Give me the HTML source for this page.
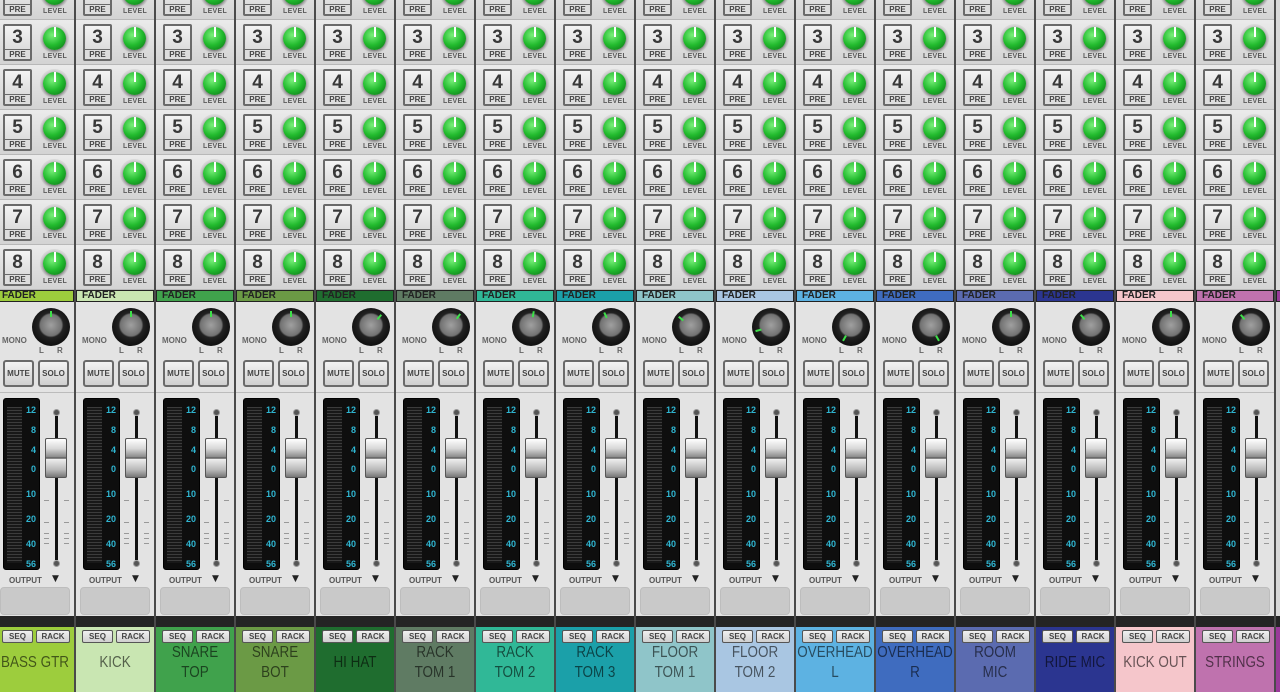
<!DOCTYPE html>
<html><head><meta charset="utf-8"><style>
*{box-sizing:border-box}
body{margin:0;width:1280px;height:692px;overflow:hidden;background:#262626;font-family:"Liberation Sans",sans-serif;position:relative}
.s{position:absolute;top:0;width:80px;height:692px;border-right:2px solid #4a4a4a;background:#e3e3e3;overflow:hidden}
.r{position:absolute;left:0;width:78px;height:45px;background:linear-gradient(#ebebeb,#d3d3d3);border-bottom:1px solid #b8b8b8}
.r2{top:-25px}.r3{top:20px}.r4{top:65px}.r5{top:110px}.r6{top:155px}.r7{top:200px}.r8{top:245px}
.r b{position:absolute;left:7px;top:4px;width:29px;height:37px;border:2px solid #6a6a6a;border-radius:2px;background:linear-gradient(#f4f4f4,#d2d2d2);font:bold 19px/24px "Liberation Sans",sans-serif;text-align:center;color:#383838}
.r i{position:absolute;left:9px;top:29px;width:25px;height:10px;border-top:1px solid #6a6a6a;font:bold 8px/10px "Liberation Sans",sans-serif;text-align:center;font-style:normal;color:#444;background:#ddd}
.r u{position:absolute;left:47px;top:7px;width:23px;height:23px;border-radius:50%;background:radial-gradient(circle at 40% 35%,#7af07a,#22bb2e 50%,#0b6a14);box-shadow:0 1px 3px #0009,0 0 0 3px rgba(120,120,120,.12)}
.r u::after{content:"";position:absolute;left:10.5px;top:0;width:2px;height:10px;background:#fff}
.r em{position:absolute;left:47px;top:33px;font:bold 7px/8px "Liberation Sans",sans-serif;color:#5a5a5a;font-style:normal;letter-spacing:.3px}
.f{position:absolute;top:290px;left:0;width:78px;height:12px;border:1px solid #222;background:var(--c);font:bold 10px/10px "Liberation Sans",sans-serif;color:#222;padding-left:5px}
.p{position:absolute;left:36px;top:308px;width:38px;height:38px;border-radius:50%;background:radial-gradient(circle at 50% 45%,#a0a0a0 0,#727272 38%,#222 44%,#111 70%,#2a2a2a 100%)}
.p i{position:absolute;left:0;top:0;width:38px;height:38px}
.p i::before{content:"";position:absolute;left:18px;top:3px;width:2px;height:6px;background:#3ee04a}
.mo{position:absolute;left:6px;top:336px;font:bold 8px "Liberation Sans",sans-serif;color:#666}
.lr{position:absolute;top:346px;font:bold 8px "Liberation Sans",sans-serif;color:#666}
.m{position:absolute;top:360px;width:31px;height:27px;border:2px solid #6a6a6a;border-radius:3px;background:linear-gradient(#f3f3f3,#cfcfcf);font:bold 8px/23px "Liberation Sans",sans-serif;text-align:center;color:#444}
.dv{position:absolute;top:392px;left:0;width:78px;height:1px;background:#bbb}
.mt{position:absolute;left:7px;top:398px;width:37px;height:172px;background:#0e0e0e;border:1px solid #000;border-radius:3px}
.mt s{position:absolute;left:3px;top:8px;width:15px;bottom:6px;background:repeating-linear-gradient(#3c3c3c 0 1px,#181818 1px 3px)}
.mt span{position:absolute;right:3px;color:#2fb6d2;font:bold 9px/10px "Liberation Sans",sans-serif}
.tr{position:absolute;left:59px;top:416px;width:3px;height:144px;background:#111}
.dt{position:absolute;left:57px;width:7px;height:7px;border-radius:50%;background:#555;border:1px solid #999}
.h{position:absolute;left:49px;top:438px;width:22px;height:40px;border:1px solid #555;border-radius:2px;background:linear-gradient(#fff 0,#d8d8d8 25%,#888 48%,#333 50%,#eee 53%,#bbb 80%,#777 100%)}
.tk{position:absolute;left:48px;width:25px;height:1px;background:linear-gradient(90deg,#999 0 5px,transparent 5px 20px,#999 20px)}
.o{position:absolute;left:13px;top:576px;font:bold 8px "Liberation Sans",sans-serif;color:#555}
.a{position:absolute;left:56px;top:574px;font:9px "DejaVu Sans",sans-serif;color:#222}
.g{position:absolute;left:4px;top:587px;width:70px;height:28px;background:#c9c9c9;border-radius:4px;border:1px solid #bdbdbd}
.bd{position:absolute;left:0;top:616px;width:78px;height:11px;background:#242424}
.lb{position:absolute;left:0;top:627px;width:78px;height:65px;background:var(--c)}
.q{position:absolute;top:630px;height:13px;border:1px solid #555;border-radius:2px;background:linear-gradient(#f0f0f0,#cfcfcf);font:bold 8px/11px "Liberation Sans",sans-serif;text-align:center;color:#444}
.n{position:absolute;left:-4px;top:643px;width:86px;height:40px;display:flex;align-items:center;justify-content:center;text-align:center;font:16px/20px "Liberation Sans",sans-serif;color:rgba(0,0,0,.58);white-space:nowrap;transform:scaleX(.84)}
</style></head><body>
<div class="s" style="left:-4px;--c:#9dcd3d"><div class="r r2"><b>2</b><i>PRE</i><u></u><em>LEVEL</em></div><div class="r r3"><b>3</b><i>PRE</i><u></u><em>LEVEL</em></div><div class="r r4"><b>4</b><i>PRE</i><u></u><em>LEVEL</em></div><div class="r r5"><b>5</b><i>PRE</i><u></u><em>LEVEL</em></div><div class="r r6"><b>6</b><i>PRE</i><u></u><em>LEVEL</em></div><div class="r r7"><b>7</b><i>PRE</i><u></u><em>LEVEL</em></div><div class="r r8"><b>8</b><i>PRE</i><u></u><em>LEVEL</em></div><div class="f">FADER</div><div class="p"><i style="transform:rotate(0deg)"></i></div><div class="mo">MONO</div><div class="lr" style="left:43px">L</div><div class="lr" style="left:61px">R</div><div class="m" style="left:7px">MUTE</div><div class="m" style="left:42px">SOLO</div><div class="dv"></div><div class="mt"><s></s><span style="top:6px">12</span><span style="top:26px">8</span><span style="top:46px">4</span><span style="top:65px">0</span><span style="top:90px">10</span><span style="top:115px">20</span><span style="top:140px">40</span><span style="top:160px">56</span></div><div class="tr"></div><div class="dt" style="top:409px"></div><div class="dt" style="top:560px"></div><div class="tk" style="top:500px"></div><div class="tk" style="top:522px"></div><div class="tk" style="top:533px"></div><div class="tk" style="top:538px"></div><div class="tk" style="top:543px"></div><div class="h"></div><div class="o">OUTPUT</div><div class="a">▼</div><div class="g"></div><div class="bd"></div><div class="lb"></div><div class="q" style="left:6px;width:31px">SEQ</div><div class="q" style="left:40px;width:34px">RACK</div><div class="n">BASS GTR</div></div>
<div class="s" style="left:76px;--c:#c9e6b2"><div class="r r2"><b>2</b><i>PRE</i><u></u><em>LEVEL</em></div><div class="r r3"><b>3</b><i>PRE</i><u></u><em>LEVEL</em></div><div class="r r4"><b>4</b><i>PRE</i><u></u><em>LEVEL</em></div><div class="r r5"><b>5</b><i>PRE</i><u></u><em>LEVEL</em></div><div class="r r6"><b>6</b><i>PRE</i><u></u><em>LEVEL</em></div><div class="r r7"><b>7</b><i>PRE</i><u></u><em>LEVEL</em></div><div class="r r8"><b>8</b><i>PRE</i><u></u><em>LEVEL</em></div><div class="f">FADER</div><div class="p"><i style="transform:rotate(0deg)"></i></div><div class="mo">MONO</div><div class="lr" style="left:43px">L</div><div class="lr" style="left:61px">R</div><div class="m" style="left:7px">MUTE</div><div class="m" style="left:42px">SOLO</div><div class="dv"></div><div class="mt"><s></s><span style="top:6px">12</span><span style="top:26px">8</span><span style="top:46px">4</span><span style="top:65px">0</span><span style="top:90px">10</span><span style="top:115px">20</span><span style="top:140px">40</span><span style="top:160px">56</span></div><div class="tr"></div><div class="dt" style="top:409px"></div><div class="dt" style="top:560px"></div><div class="tk" style="top:500px"></div><div class="tk" style="top:522px"></div><div class="tk" style="top:533px"></div><div class="tk" style="top:538px"></div><div class="tk" style="top:543px"></div><div class="h"></div><div class="o">OUTPUT</div><div class="a">▼</div><div class="g"></div><div class="bd"></div><div class="lb"></div><div class="q" style="left:6px;width:31px">SEQ</div><div class="q" style="left:40px;width:34px">RACK</div><div class="n">KICK</div></div>
<div class="s" style="left:156px;--c:#40a24c"><div class="r r2"><b>2</b><i>PRE</i><u></u><em>LEVEL</em></div><div class="r r3"><b>3</b><i>PRE</i><u></u><em>LEVEL</em></div><div class="r r4"><b>4</b><i>PRE</i><u></u><em>LEVEL</em></div><div class="r r5"><b>5</b><i>PRE</i><u></u><em>LEVEL</em></div><div class="r r6"><b>6</b><i>PRE</i><u></u><em>LEVEL</em></div><div class="r r7"><b>7</b><i>PRE</i><u></u><em>LEVEL</em></div><div class="r r8"><b>8</b><i>PRE</i><u></u><em>LEVEL</em></div><div class="f">FADER</div><div class="p"><i style="transform:rotate(0deg)"></i></div><div class="mo">MONO</div><div class="lr" style="left:43px">L</div><div class="lr" style="left:61px">R</div><div class="m" style="left:7px">MUTE</div><div class="m" style="left:42px">SOLO</div><div class="dv"></div><div class="mt"><s></s><span style="top:6px">12</span><span style="top:26px">8</span><span style="top:46px">4</span><span style="top:65px">0</span><span style="top:90px">10</span><span style="top:115px">20</span><span style="top:140px">40</span><span style="top:160px">56</span></div><div class="tr"></div><div class="dt" style="top:409px"></div><div class="dt" style="top:560px"></div><div class="tk" style="top:500px"></div><div class="tk" style="top:522px"></div><div class="tk" style="top:533px"></div><div class="tk" style="top:538px"></div><div class="tk" style="top:543px"></div><div class="h"></div><div class="o">OUTPUT</div><div class="a">▼</div><div class="g"></div><div class="bd"></div><div class="lb"></div><div class="q" style="left:6px;width:31px">SEQ</div><div class="q" style="left:40px;width:34px">RACK</div><div class="n">SNARE<br>TOP</div></div>
<div class="s" style="left:236px;--c:#6b9a45"><div class="r r2"><b>2</b><i>PRE</i><u></u><em>LEVEL</em></div><div class="r r3"><b>3</b><i>PRE</i><u></u><em>LEVEL</em></div><div class="r r4"><b>4</b><i>PRE</i><u></u><em>LEVEL</em></div><div class="r r5"><b>5</b><i>PRE</i><u></u><em>LEVEL</em></div><div class="r r6"><b>6</b><i>PRE</i><u></u><em>LEVEL</em></div><div class="r r7"><b>7</b><i>PRE</i><u></u><em>LEVEL</em></div><div class="r r8"><b>8</b><i>PRE</i><u></u><em>LEVEL</em></div><div class="f">FADER</div><div class="p"><i style="transform:rotate(0deg)"></i></div><div class="mo">MONO</div><div class="lr" style="left:43px">L</div><div class="lr" style="left:61px">R</div><div class="m" style="left:7px">MUTE</div><div class="m" style="left:42px">SOLO</div><div class="dv"></div><div class="mt"><s></s><span style="top:6px">12</span><span style="top:26px">8</span><span style="top:46px">4</span><span style="top:65px">0</span><span style="top:90px">10</span><span style="top:115px">20</span><span style="top:140px">40</span><span style="top:160px">56</span></div><div class="tr"></div><div class="dt" style="top:409px"></div><div class="dt" style="top:560px"></div><div class="tk" style="top:500px"></div><div class="tk" style="top:522px"></div><div class="tk" style="top:533px"></div><div class="tk" style="top:538px"></div><div class="tk" style="top:543px"></div><div class="h"></div><div class="o">OUTPUT</div><div class="a">▼</div><div class="g"></div><div class="bd"></div><div class="lb"></div><div class="q" style="left:6px;width:31px">SEQ</div><div class="q" style="left:40px;width:34px">RACK</div><div class="n">SNARE<br>BOT</div></div>
<div class="s" style="left:316px;--c:#1f6d2f"><div class="r r2"><b>2</b><i>PRE</i><u></u><em>LEVEL</em></div><div class="r r3"><b>3</b><i>PRE</i><u></u><em>LEVEL</em></div><div class="r r4"><b>4</b><i>PRE</i><u></u><em>LEVEL</em></div><div class="r r5"><b>5</b><i>PRE</i><u></u><em>LEVEL</em></div><div class="r r6"><b>6</b><i>PRE</i><u></u><em>LEVEL</em></div><div class="r r7"><b>7</b><i>PRE</i><u></u><em>LEVEL</em></div><div class="r r8"><b>8</b><i>PRE</i><u></u><em>LEVEL</em></div><div class="f">FADER</div><div class="p"><i style="transform:rotate(40deg)"></i></div><div class="mo">MONO</div><div class="lr" style="left:43px">L</div><div class="lr" style="left:61px">R</div><div class="m" style="left:7px">MUTE</div><div class="m" style="left:42px">SOLO</div><div class="dv"></div><div class="mt"><s></s><span style="top:6px">12</span><span style="top:26px">8</span><span style="top:46px">4</span><span style="top:65px">0</span><span style="top:90px">10</span><span style="top:115px">20</span><span style="top:140px">40</span><span style="top:160px">56</span></div><div class="tr"></div><div class="dt" style="top:409px"></div><div class="dt" style="top:560px"></div><div class="tk" style="top:500px"></div><div class="tk" style="top:522px"></div><div class="tk" style="top:533px"></div><div class="tk" style="top:538px"></div><div class="tk" style="top:543px"></div><div class="h"></div><div class="o">OUTPUT</div><div class="a">▼</div><div class="g"></div><div class="bd"></div><div class="lb"></div><div class="q" style="left:6px;width:31px">SEQ</div><div class="q" style="left:40px;width:34px">RACK</div><div class="n">HI HAT</div></div>
<div class="s" style="left:396px;--c:#5f7b63"><div class="r r2"><b>2</b><i>PRE</i><u></u><em>LEVEL</em></div><div class="r r3"><b>3</b><i>PRE</i><u></u><em>LEVEL</em></div><div class="r r4"><b>4</b><i>PRE</i><u></u><em>LEVEL</em></div><div class="r r5"><b>5</b><i>PRE</i><u></u><em>LEVEL</em></div><div class="r r6"><b>6</b><i>PRE</i><u></u><em>LEVEL</em></div><div class="r r7"><b>7</b><i>PRE</i><u></u><em>LEVEL</em></div><div class="r r8"><b>8</b><i>PRE</i><u></u><em>LEVEL</em></div><div class="f">FADER</div><div class="p"><i style="transform:rotate(35deg)"></i></div><div class="mo">MONO</div><div class="lr" style="left:43px">L</div><div class="lr" style="left:61px">R</div><div class="m" style="left:7px">MUTE</div><div class="m" style="left:42px">SOLO</div><div class="dv"></div><div class="mt"><s></s><span style="top:6px">12</span><span style="top:26px">8</span><span style="top:46px">4</span><span style="top:65px">0</span><span style="top:90px">10</span><span style="top:115px">20</span><span style="top:140px">40</span><span style="top:160px">56</span></div><div class="tr"></div><div class="dt" style="top:409px"></div><div class="dt" style="top:560px"></div><div class="tk" style="top:500px"></div><div class="tk" style="top:522px"></div><div class="tk" style="top:533px"></div><div class="tk" style="top:538px"></div><div class="tk" style="top:543px"></div><div class="h"></div><div class="o">OUTPUT</div><div class="a">▼</div><div class="g"></div><div class="bd"></div><div class="lb"></div><div class="q" style="left:6px;width:31px">SEQ</div><div class="q" style="left:40px;width:34px">RACK</div><div class="n">RACK<br>TOM 1</div></div>
<div class="s" style="left:476px;--c:#30b897"><div class="r r2"><b>2</b><i>PRE</i><u></u><em>LEVEL</em></div><div class="r r3"><b>3</b><i>PRE</i><u></u><em>LEVEL</em></div><div class="r r4"><b>4</b><i>PRE</i><u></u><em>LEVEL</em></div><div class="r r5"><b>5</b><i>PRE</i><u></u><em>LEVEL</em></div><div class="r r6"><b>6</b><i>PRE</i><u></u><em>LEVEL</em></div><div class="r r7"><b>7</b><i>PRE</i><u></u><em>LEVEL</em></div><div class="r r8"><b>8</b><i>PRE</i><u></u><em>LEVEL</em></div><div class="f">FADER</div><div class="p"><i style="transform:rotate(10deg)"></i></div><div class="mo">MONO</div><div class="lr" style="left:43px">L</div><div class="lr" style="left:61px">R</div><div class="m" style="left:7px">MUTE</div><div class="m" style="left:42px">SOLO</div><div class="dv"></div><div class="mt"><s></s><span style="top:6px">12</span><span style="top:26px">8</span><span style="top:46px">4</span><span style="top:65px">0</span><span style="top:90px">10</span><span style="top:115px">20</span><span style="top:140px">40</span><span style="top:160px">56</span></div><div class="tr"></div><div class="dt" style="top:409px"></div><div class="dt" style="top:560px"></div><div class="tk" style="top:500px"></div><div class="tk" style="top:522px"></div><div class="tk" style="top:533px"></div><div class="tk" style="top:538px"></div><div class="tk" style="top:543px"></div><div class="h"></div><div class="o">OUTPUT</div><div class="a">▼</div><div class="g"></div><div class="bd"></div><div class="lb"></div><div class="q" style="left:6px;width:31px">SEQ</div><div class="q" style="left:40px;width:34px">RACK</div><div class="n">RACK<br>TOM 2</div></div>
<div class="s" style="left:556px;--c:#1ba0a9"><div class="r r2"><b>2</b><i>PRE</i><u></u><em>LEVEL</em></div><div class="r r3"><b>3</b><i>PRE</i><u></u><em>LEVEL</em></div><div class="r r4"><b>4</b><i>PRE</i><u></u><em>LEVEL</em></div><div class="r r5"><b>5</b><i>PRE</i><u></u><em>LEVEL</em></div><div class="r r6"><b>6</b><i>PRE</i><u></u><em>LEVEL</em></div><div class="r r7"><b>7</b><i>PRE</i><u></u><em>LEVEL</em></div><div class="r r8"><b>8</b><i>PRE</i><u></u><em>LEVEL</em></div><div class="f">FADER</div><div class="p"><i style="transform:rotate(-25deg)"></i></div><div class="mo">MONO</div><div class="lr" style="left:43px">L</div><div class="lr" style="left:61px">R</div><div class="m" style="left:7px">MUTE</div><div class="m" style="left:42px">SOLO</div><div class="dv"></div><div class="mt"><s></s><span style="top:6px">12</span><span style="top:26px">8</span><span style="top:46px">4</span><span style="top:65px">0</span><span style="top:90px">10</span><span style="top:115px">20</span><span style="top:140px">40</span><span style="top:160px">56</span></div><div class="tr"></div><div class="dt" style="top:409px"></div><div class="dt" style="top:560px"></div><div class="tk" style="top:500px"></div><div class="tk" style="top:522px"></div><div class="tk" style="top:533px"></div><div class="tk" style="top:538px"></div><div class="tk" style="top:543px"></div><div class="h"></div><div class="o">OUTPUT</div><div class="a">▼</div><div class="g"></div><div class="bd"></div><div class="lb"></div><div class="q" style="left:6px;width:31px">SEQ</div><div class="q" style="left:40px;width:34px">RACK</div><div class="n">RACK<br>TOM 3</div></div>
<div class="s" style="left:636px;--c:#8fc5c9"><div class="r r2"><b>2</b><i>PRE</i><u></u><em>LEVEL</em></div><div class="r r3"><b>3</b><i>PRE</i><u></u><em>LEVEL</em></div><div class="r r4"><b>4</b><i>PRE</i><u></u><em>LEVEL</em></div><div class="r r5"><b>5</b><i>PRE</i><u></u><em>LEVEL</em></div><div class="r r6"><b>6</b><i>PRE</i><u></u><em>LEVEL</em></div><div class="r r7"><b>7</b><i>PRE</i><u></u><em>LEVEL</em></div><div class="r r8"><b>8</b><i>PRE</i><u></u><em>LEVEL</em></div><div class="f">FADER</div><div class="p"><i style="transform:rotate(-50deg)"></i></div><div class="mo">MONO</div><div class="lr" style="left:43px">L</div><div class="lr" style="left:61px">R</div><div class="m" style="left:7px">MUTE</div><div class="m" style="left:42px">SOLO</div><div class="dv"></div><div class="mt"><s></s><span style="top:6px">12</span><span style="top:26px">8</span><span style="top:46px">4</span><span style="top:65px">0</span><span style="top:90px">10</span><span style="top:115px">20</span><span style="top:140px">40</span><span style="top:160px">56</span></div><div class="tr"></div><div class="dt" style="top:409px"></div><div class="dt" style="top:560px"></div><div class="tk" style="top:500px"></div><div class="tk" style="top:522px"></div><div class="tk" style="top:533px"></div><div class="tk" style="top:538px"></div><div class="tk" style="top:543px"></div><div class="h"></div><div class="o">OUTPUT</div><div class="a">▼</div><div class="g"></div><div class="bd"></div><div class="lb"></div><div class="q" style="left:6px;width:31px">SEQ</div><div class="q" style="left:40px;width:34px">RACK</div><div class="n">FLOOR<br>TOM 1</div></div>
<div class="s" style="left:716px;--c:#a9c6e2"><div class="r r2"><b>2</b><i>PRE</i><u></u><em>LEVEL</em></div><div class="r r3"><b>3</b><i>PRE</i><u></u><em>LEVEL</em></div><div class="r r4"><b>4</b><i>PRE</i><u></u><em>LEVEL</em></div><div class="r r5"><b>5</b><i>PRE</i><u></u><em>LEVEL</em></div><div class="r r6"><b>6</b><i>PRE</i><u></u><em>LEVEL</em></div><div class="r r7"><b>7</b><i>PRE</i><u></u><em>LEVEL</em></div><div class="r r8"><b>8</b><i>PRE</i><u></u><em>LEVEL</em></div><div class="f">FADER</div><div class="p"><i style="transform:rotate(-105deg)"></i></div><div class="mo">MONO</div><div class="lr" style="left:43px">L</div><div class="lr" style="left:61px">R</div><div class="m" style="left:7px">MUTE</div><div class="m" style="left:42px">SOLO</div><div class="dv"></div><div class="mt"><s></s><span style="top:6px">12</span><span style="top:26px">8</span><span style="top:46px">4</span><span style="top:65px">0</span><span style="top:90px">10</span><span style="top:115px">20</span><span style="top:140px">40</span><span style="top:160px">56</span></div><div class="tr"></div><div class="dt" style="top:409px"></div><div class="dt" style="top:560px"></div><div class="tk" style="top:500px"></div><div class="tk" style="top:522px"></div><div class="tk" style="top:533px"></div><div class="tk" style="top:538px"></div><div class="tk" style="top:543px"></div><div class="h"></div><div class="o">OUTPUT</div><div class="a">▼</div><div class="g"></div><div class="bd"></div><div class="lb"></div><div class="q" style="left:6px;width:31px">SEQ</div><div class="q" style="left:40px;width:34px">RACK</div><div class="n">FLOOR<br>TOM 2</div></div>
<div class="s" style="left:796px;--c:#5db2e2"><div class="r r2"><b>2</b><i>PRE</i><u></u><em>LEVEL</em></div><div class="r r3"><b>3</b><i>PRE</i><u></u><em>LEVEL</em></div><div class="r r4"><b>4</b><i>PRE</i><u></u><em>LEVEL</em></div><div class="r r5"><b>5</b><i>PRE</i><u></u><em>LEVEL</em></div><div class="r r6"><b>6</b><i>PRE</i><u></u><em>LEVEL</em></div><div class="r r7"><b>7</b><i>PRE</i><u></u><em>LEVEL</em></div><div class="r r8"><b>8</b><i>PRE</i><u></u><em>LEVEL</em></div><div class="f">FADER</div><div class="p"><i style="transform:rotate(-150deg)"></i></div><div class="mo">MONO</div><div class="lr" style="left:43px">L</div><div class="lr" style="left:61px">R</div><div class="m" style="left:7px">MUTE</div><div class="m" style="left:42px">SOLO</div><div class="dv"></div><div class="mt"><s></s><span style="top:6px">12</span><span style="top:26px">8</span><span style="top:46px">4</span><span style="top:65px">0</span><span style="top:90px">10</span><span style="top:115px">20</span><span style="top:140px">40</span><span style="top:160px">56</span></div><div class="tr"></div><div class="dt" style="top:409px"></div><div class="dt" style="top:560px"></div><div class="tk" style="top:500px"></div><div class="tk" style="top:522px"></div><div class="tk" style="top:533px"></div><div class="tk" style="top:538px"></div><div class="tk" style="top:543px"></div><div class="h"></div><div class="o">OUTPUT</div><div class="a">▼</div><div class="g"></div><div class="bd"></div><div class="lb"></div><div class="q" style="left:6px;width:31px">SEQ</div><div class="q" style="left:40px;width:34px">RACK</div><div class="n">OVERHEAD<br>L</div></div>
<div class="s" style="left:876px;--c:#3f6cbf"><div class="r r2"><b>2</b><i>PRE</i><u></u><em>LEVEL</em></div><div class="r r3"><b>3</b><i>PRE</i><u></u><em>LEVEL</em></div><div class="r r4"><b>4</b><i>PRE</i><u></u><em>LEVEL</em></div><div class="r r5"><b>5</b><i>PRE</i><u></u><em>LEVEL</em></div><div class="r r6"><b>6</b><i>PRE</i><u></u><em>LEVEL</em></div><div class="r r7"><b>7</b><i>PRE</i><u></u><em>LEVEL</em></div><div class="r r8"><b>8</b><i>PRE</i><u></u><em>LEVEL</em></div><div class="f">FADER</div><div class="p"><i style="transform:rotate(150deg)"></i></div><div class="mo">MONO</div><div class="lr" style="left:43px">L</div><div class="lr" style="left:61px">R</div><div class="m" style="left:7px">MUTE</div><div class="m" style="left:42px">SOLO</div><div class="dv"></div><div class="mt"><s></s><span style="top:6px">12</span><span style="top:26px">8</span><span style="top:46px">4</span><span style="top:65px">0</span><span style="top:90px">10</span><span style="top:115px">20</span><span style="top:140px">40</span><span style="top:160px">56</span></div><div class="tr"></div><div class="dt" style="top:409px"></div><div class="dt" style="top:560px"></div><div class="tk" style="top:500px"></div><div class="tk" style="top:522px"></div><div class="tk" style="top:533px"></div><div class="tk" style="top:538px"></div><div class="tk" style="top:543px"></div><div class="h"></div><div class="o">OUTPUT</div><div class="a">▼</div><div class="g"></div><div class="bd"></div><div class="lb"></div><div class="q" style="left:6px;width:31px">SEQ</div><div class="q" style="left:40px;width:34px">RACK</div><div class="n">OVERHEAD<br>R</div></div>
<div class="s" style="left:956px;--c:#5b6bb0"><div class="r r2"><b>2</b><i>PRE</i><u></u><em>LEVEL</em></div><div class="r r3"><b>3</b><i>PRE</i><u></u><em>LEVEL</em></div><div class="r r4"><b>4</b><i>PRE</i><u></u><em>LEVEL</em></div><div class="r r5"><b>5</b><i>PRE</i><u></u><em>LEVEL</em></div><div class="r r6"><b>6</b><i>PRE</i><u></u><em>LEVEL</em></div><div class="r r7"><b>7</b><i>PRE</i><u></u><em>LEVEL</em></div><div class="r r8"><b>8</b><i>PRE</i><u></u><em>LEVEL</em></div><div class="f">FADER</div><div class="p"><i style="transform:rotate(0deg)"></i></div><div class="mo">MONO</div><div class="lr" style="left:43px">L</div><div class="lr" style="left:61px">R</div><div class="m" style="left:7px">MUTE</div><div class="m" style="left:42px">SOLO</div><div class="dv"></div><div class="mt"><s></s><span style="top:6px">12</span><span style="top:26px">8</span><span style="top:46px">4</span><span style="top:65px">0</span><span style="top:90px">10</span><span style="top:115px">20</span><span style="top:140px">40</span><span style="top:160px">56</span></div><div class="tr"></div><div class="dt" style="top:409px"></div><div class="dt" style="top:560px"></div><div class="tk" style="top:500px"></div><div class="tk" style="top:522px"></div><div class="tk" style="top:533px"></div><div class="tk" style="top:538px"></div><div class="tk" style="top:543px"></div><div class="h"></div><div class="o">OUTPUT</div><div class="a">▼</div><div class="g"></div><div class="bd"></div><div class="lb"></div><div class="q" style="left:6px;width:31px">SEQ</div><div class="q" style="left:40px;width:34px">RACK</div><div class="n">ROOM<br>MIC</div></div>
<div class="s" style="left:1036px;--c:#2b3590"><div class="r r2"><b>2</b><i>PRE</i><u></u><em>LEVEL</em></div><div class="r r3"><b>3</b><i>PRE</i><u></u><em>LEVEL</em></div><div class="r r4"><b>4</b><i>PRE</i><u></u><em>LEVEL</em></div><div class="r r5"><b>5</b><i>PRE</i><u></u><em>LEVEL</em></div><div class="r r6"><b>6</b><i>PRE</i><u></u><em>LEVEL</em></div><div class="r r7"><b>7</b><i>PRE</i><u></u><em>LEVEL</em></div><div class="r r8"><b>8</b><i>PRE</i><u></u><em>LEVEL</em></div><div class="f">FADER</div><div class="p"><i style="transform:rotate(-40deg)"></i></div><div class="mo">MONO</div><div class="lr" style="left:43px">L</div><div class="lr" style="left:61px">R</div><div class="m" style="left:7px">MUTE</div><div class="m" style="left:42px">SOLO</div><div class="dv"></div><div class="mt"><s></s><span style="top:6px">12</span><span style="top:26px">8</span><span style="top:46px">4</span><span style="top:65px">0</span><span style="top:90px">10</span><span style="top:115px">20</span><span style="top:140px">40</span><span style="top:160px">56</span></div><div class="tr"></div><div class="dt" style="top:409px"></div><div class="dt" style="top:560px"></div><div class="tk" style="top:500px"></div><div class="tk" style="top:522px"></div><div class="tk" style="top:533px"></div><div class="tk" style="top:538px"></div><div class="tk" style="top:543px"></div><div class="h"></div><div class="o">OUTPUT</div><div class="a">▼</div><div class="g"></div><div class="bd"></div><div class="lb"></div><div class="q" style="left:6px;width:31px">SEQ</div><div class="q" style="left:40px;width:34px">RACK</div><div class="n">RIDE MIC</div></div>
<div class="s" style="left:1116px;--c:#f5c6cb"><div class="r r2"><b>2</b><i>PRE</i><u></u><em>LEVEL</em></div><div class="r r3"><b>3</b><i>PRE</i><u></u><em>LEVEL</em></div><div class="r r4"><b>4</b><i>PRE</i><u></u><em>LEVEL</em></div><div class="r r5"><b>5</b><i>PRE</i><u></u><em>LEVEL</em></div><div class="r r6"><b>6</b><i>PRE</i><u></u><em>LEVEL</em></div><div class="r r7"><b>7</b><i>PRE</i><u></u><em>LEVEL</em></div><div class="r r8"><b>8</b><i>PRE</i><u></u><em>LEVEL</em></div><div class="f">FADER</div><div class="p"><i style="transform:rotate(0deg)"></i></div><div class="mo">MONO</div><div class="lr" style="left:43px">L</div><div class="lr" style="left:61px">R</div><div class="m" style="left:7px">MUTE</div><div class="m" style="left:42px">SOLO</div><div class="dv"></div><div class="mt"><s></s><span style="top:6px">12</span><span style="top:26px">8</span><span style="top:46px">4</span><span style="top:65px">0</span><span style="top:90px">10</span><span style="top:115px">20</span><span style="top:140px">40</span><span style="top:160px">56</span></div><div class="tr"></div><div class="dt" style="top:409px"></div><div class="dt" style="top:560px"></div><div class="tk" style="top:500px"></div><div class="tk" style="top:522px"></div><div class="tk" style="top:533px"></div><div class="tk" style="top:538px"></div><div class="tk" style="top:543px"></div><div class="h"></div><div class="o">OUTPUT</div><div class="a">▼</div><div class="g"></div><div class="bd"></div><div class="lb"></div><div class="q" style="left:6px;width:31px">SEQ</div><div class="q" style="left:40px;width:34px">RACK</div><div class="n">KICK OUT</div></div>
<div class="s" style="left:1196px;--c:#bf72ae"><div class="r r2"><b>2</b><i>PRE</i><u></u><em>LEVEL</em></div><div class="r r3"><b>3</b><i>PRE</i><u></u><em>LEVEL</em></div><div class="r r4"><b>4</b><i>PRE</i><u></u><em>LEVEL</em></div><div class="r r5"><b>5</b><i>PRE</i><u></u><em>LEVEL</em></div><div class="r r6"><b>6</b><i>PRE</i><u></u><em>LEVEL</em></div><div class="r r7"><b>7</b><i>PRE</i><u></u><em>LEVEL</em></div><div class="r r8"><b>8</b><i>PRE</i><u></u><em>LEVEL</em></div><div class="f">FADER</div><div class="p"><i style="transform:rotate(-40deg)"></i></div><div class="mo">MONO</div><div class="lr" style="left:43px">L</div><div class="lr" style="left:61px">R</div><div class="m" style="left:7px">MUTE</div><div class="m" style="left:42px">SOLO</div><div class="dv"></div><div class="mt"><s></s><span style="top:6px">12</span><span style="top:26px">8</span><span style="top:46px">4</span><span style="top:65px">0</span><span style="top:90px">10</span><span style="top:115px">20</span><span style="top:140px">40</span><span style="top:160px">56</span></div><div class="tr"></div><div class="dt" style="top:409px"></div><div class="dt" style="top:560px"></div><div class="tk" style="top:500px"></div><div class="tk" style="top:522px"></div><div class="tk" style="top:533px"></div><div class="tk" style="top:538px"></div><div class="tk" style="top:543px"></div><div class="h"></div><div class="o">OUTPUT</div><div class="a">▼</div><div class="g"></div><div class="bd"></div><div class="lb"></div><div class="q" style="left:6px;width:31px">SEQ</div><div class="q" style="left:40px;width:34px">RACK</div><div class="n">STRINGS</div></div>
<div class="s" style="left:1276px;--c:#9a3a9a;background:#d8d8d8"><div class="f"></div><div class="bd"></div><div class="lb"></div></div>
</body></html>
